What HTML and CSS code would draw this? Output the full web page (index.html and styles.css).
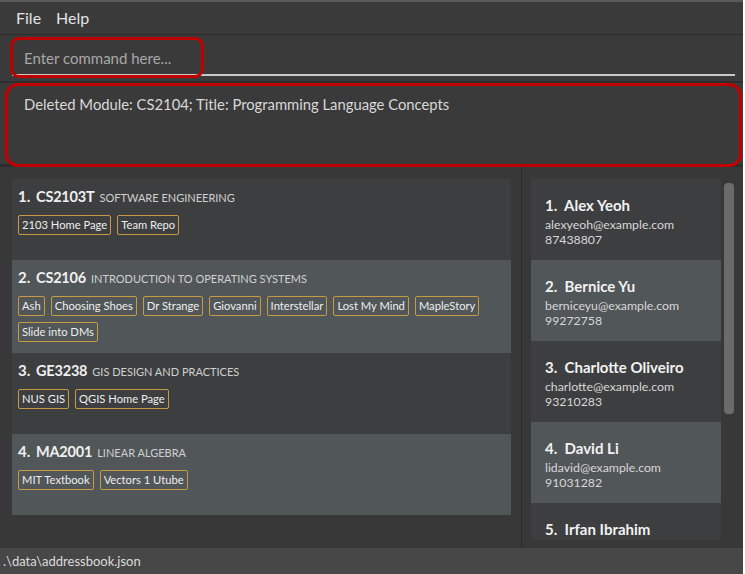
FILE: index.html
```html
<!DOCTYPE html>
<html>
<head>
<meta charset="utf-8">
<link rel="stylesheet" href="styles.css">
</head>
<body>
<div class="app">
  <div class="menubar">
    <span class="menu-item">File</span>
    <span class="menu-item">Help</span>
  </div>
  <div class="command">
    <div class="command-input">Enter command here...</div>
    <div class="annot annot-cmd"></div>
  </div>
  <div class="result">
    <div class="result-text">Deleted Module: CS2104; Title: Programming Language Concepts</div>
    <div class="annot annot-result"></div>
  </div>
  <div class="main">
    <div class="modules">
      <div class="mcard">
        <div class="mhead"><span class="idx">1.</span><span class="code">CS2103T</span><span class="title">SOFTWARE ENGINEERING</span></div>
        <div class="tags"><span class="tag">2103 Home Page</span><span class="tag">Team Repo</span></div>
      </div>
      <div class="mcard alt">
        <div class="mhead"><span class="idx">2.</span><span class="code">CS2106</span><span class="title">INTRODUCTION TO OPERATING SYSTEMS</span></div>
        <div class="tags"><span class="tag">Ash</span><span class="tag">Choosing Shoes</span><span class="tag">Dr Strange</span><span class="tag">Giovanni</span><span class="tag">Interstellar</span><span class="tag">Lost My Mind</span><span class="tag">MapleStory</span><span class="tag">Slide into DMs</span></div>
      </div>
      <div class="mcard">
        <div class="mhead"><span class="idx">3.</span><span class="code">GE3238</span><span class="title">GIS DESIGN AND PRACTICES</span></div>
        <div class="tags"><span class="tag">NUS GIS</span><span class="tag">QGIS Home Page</span></div>
      </div>
      <div class="mcard alt">
        <div class="mhead"><span class="idx">4.</span><span class="code">MA2001</span><span class="title">LINEAR ALGEBRA</span></div>
        <div class="tags"><span class="tag">MIT Textbook</span><span class="tag">Vectors 1 Utube</span></div>
      </div>
    </div>
    <div class="divider"></div>
    <div class="persons">
      <div class="plist">
        <div class="pcard">
          <div class="pname">1.&nbsp; Alex Yeoh</div>
          <div class="pline">alexyeoh@example.com</div>
          <div class="pline">87438807</div>
        </div>
        <div class="pcard alt">
          <div class="pname">2.&nbsp; Bernice Yu</div>
          <div class="pline">berniceyu@example.com</div>
          <div class="pline">99272758</div>
        </div>
        <div class="pcard">
          <div class="pname">3.&nbsp; Charlotte Oliveiro</div>
          <div class="pline">charlotte@example.com</div>
          <div class="pline">93210283</div>
        </div>
        <div class="pcard alt">
          <div class="pname">4.&nbsp; David Li</div>
          <div class="pline">lidavid@example.com</div>
          <div class="pline">91031282</div>
        </div>
        <div class="pcard last">
          <div class="pname">5.&nbsp; Irfan Ibrahim</div>
        </div>
      </div>
      <div class="scrolltrack"><div class="scrollthumb"></div></div>
    </div>
  </div>
  <div class="status">.\data\addressbook.json</div>
</div>
</body>
</html>
```
FILE: styles.css
```css
html, body {
  margin: 0;
  padding: 0;
  background: #ffffff;
}
body {
  width: 745px;
  height: 574px;
  overflow: hidden;
  font-family: "Lato", "Open Sans", sans-serif;
}
.app {
  width: 743px;
  height: 574px;
  background: #383838;
  display: flex;
  flex-direction: column;
  box-sizing: border-box;
  border-top: 2px solid #5a5a5a;
}
.menubar {
  background: #3a3a3a;
  border-bottom: 1px solid #2c2c2c;
  display: flex;
  align-items: center;
  padding-left: 16px;
  padding-bottom: 2px;
  gap: 15px;
  box-sizing: border-box;
  height: 33px;
}
.menu-item {
  color: #e2e2e2;
  font-size: 16px;
}
.command {
  position: relative;
  height: 46px;
  background: #3a3a3a;
  padding: 0 8px 0 12px;
  border-bottom: 2px solid #2e2e2e;
  display: flex;
  align-items: flex-end;
}
.command-input {
  flex: 1;
  height: 34px;
  line-height: 36px;
  color: #a8a8a8;
  font-size: 15px;
  padding-left: 12px;
  border-bottom: 2px solid #c8c8c8;
  margin-bottom: 5px;
}
.annot {
  position: absolute;
  border: 3px solid #c00000;
  box-sizing: border-box;
}
.annot-cmd {
  left: 10px;
  top: 2px;
  width: 194px;
  height: 41px;
  border-radius: 9px;
}
.result {
  position: relative;
  height: 84px;
  background: #3a3a3a;
  padding: 12px 24px;
  box-sizing: border-box;
  border-bottom: 3px solid #2d2d2d;
}
.result-text {
  color: #d8d8d8;
  font-size: 14.8px;
}
.annot-result {
  left: 5px;
  top: 0;
  width: 737px;
  height: 84px;
  border-radius: 13px;
}
.main {
  flex: 1;
  display: flex;
  min-height: 0;
}
.modules {
  width: 500px;
  padding: 12px 10px 0 12px;
  display: flex;
  flex-direction: column;
}
.mcard {
  background: #3c3e3f;
  min-height: 81px;
  box-sizing: border-box;
  padding: 8px 6px 11px 6px;
}
.mcard.alt {
  background: #515658;
}
.mhead {
  display: flex;
  align-items: baseline;
  color: #f0f0f0;
  height: 20px;
}
.idx {
  font-weight: bold;
  font-size: 15px;
  width: 18px;
}
.code {
  font-weight: bold;
  font-size: 14.5px;
  letter-spacing: -0.2px;
  margin-right: 5px;
}
.title {
  font-size: 11px;
  color: #d0d0d0;
}
.tags {
  display: flex;
  flex-wrap: wrap;
  gap: 6px 6px;
  margin-top: 8px;
}
.tag {
  border: 1.5px solid #c89a44;
  border-radius: 2px;
  color: #eeeeee;
  font-size: 11.2px;
  height: 20px;
  line-height: 17px;
  padding: 0 3px;
  box-sizing: border-box;
}
.divider {
  width: 1px;
  background: #2a2a2a;
}
.persons {
  flex: 1;
  display: flex;
  padding: 12px 9px 8px 9px;
  gap: 3px;
  min-height: 0;
}
.plist {
  width: 190px;
  overflow: hidden;
}
.pcard {
  background: #3c3e3f;
  height: 81px;
  box-sizing: border-box;
  padding: 16px 14px 0 14px;
}
.pcard.alt {
  background: #515658;
}
.pname {
  color: #f2f2f2;
  font-weight: bold;
  font-size: 15px;
  height: 22px;
  line-height: 20px;
}
.pline {
  color: #d8d8d8;
  font-size: 12.3px;
  line-height: 15px;
}
.scrolltrack {
  width: 10px;
  padding-top: 4px;
}
.scrollthumb {
  height: 231px;
  background: #6b6b6b;
  border-radius: 4px;
}
.status {
  height: 26px;
  background: #474747;
  color: #dcdcdc;
  font-size: 13px;
  line-height: 26px;
  padding-left: 3px;
}
```
